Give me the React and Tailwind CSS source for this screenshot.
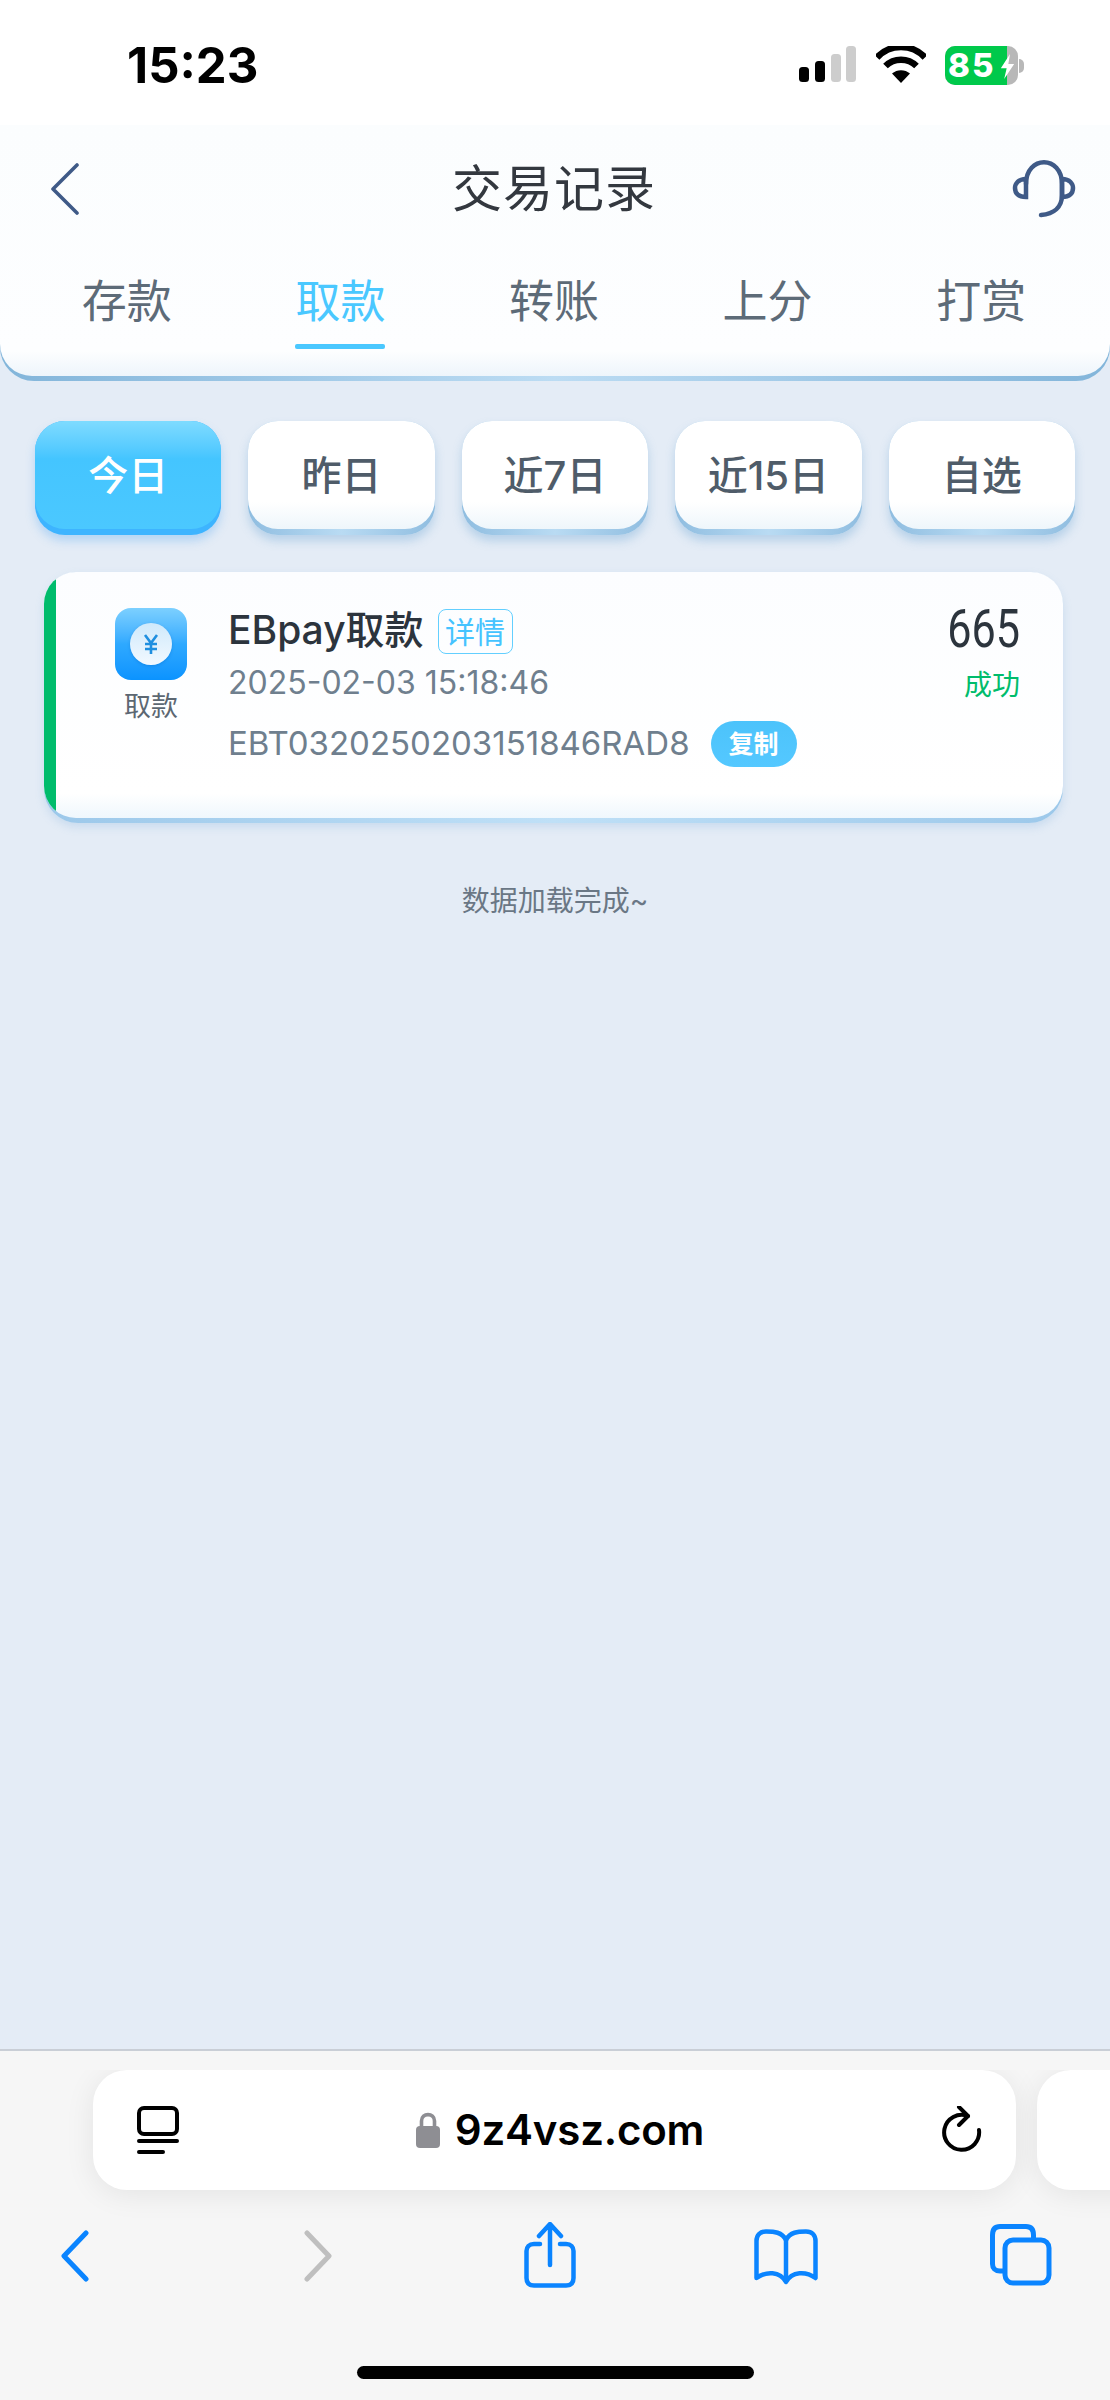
const CJK = "font-['Inter','Noto_Sans_CJK_SC',sans-serif]";

function Signal() {
  return (
    <svg width="58" height="36" viewBox="0 0 58 36" className="block">
      <rect x="0" y="21" width="10" height="15" rx="3.5" fill="#000" />
      <rect x="16" y="15" width="10" height="21" rx="3.5" fill="#000" />
      <rect x="32" y="8" width="10" height="28" rx="3.5" fill="#cdcdcd" />
      <rect x="47" y="0" width="10" height="36" rx="3.5" fill="#cdcdcd" />
    </svg>
  );
}

function Wifi() {
  return (
    <svg width="50" height="38" viewBox="0 0 50 38" className="block">
      <path d="M1 11.5 C14 -2.5 36 -2.5 49 11.5" fill="none" stroke="#000" strokeWidth="6.5" />
      <path d="M9.5 20 C18 11.5 32 11.5 40.5 20" fill="none" stroke="#000" strokeWidth="6.5" />
      <path d="M16 27.5 C21 23 29 23 34 27.5 L25 37 Z" fill="#000" />
    </svg>
  );
}

function Battery() {
  return (
    <div className="relative flex h-[39px] w-[81px] items-center">
      <div className="relative h-[39px] w-[73px] overflow-hidden rounded-[10px] bg-[#b8b8b8]">
        <div className="h-full w-[62px] bg-[#00c94b]" />
        <span className="absolute left-[3px] top-0 font-['Inter',sans-serif] text-[33px] font-extrabold leading-[39px] tracking-[2px] text-white">85</span>
        <svg width="15" height="27" viewBox="0 0 18 30" className="absolute left-[55px] top-[7px]">
          <path d="M12 0 L1 17 H8 L5 30 L17 12 H10 Z" fill="#fff" />
        </svg>
      </div>
      <div className="ml-[1px] h-[14px] w-[5px] rounded-r-full bg-[#b8b8b8]" />
    </div>
  );
}

function Headset() {
  return (
    <svg width="64" height="60" viewBox="0 0 64 60" fill="none" stroke="#3f5a87" strokeWidth="4.5" strokeLinecap="round" className="block">
      <path d="M14 25 C14 -4 50 -4 50 25 V36 C50 48 42 55 29 56" />
      <path d="M14 20 C6 20 3 25 3 29 C3 34 6 38 14 38 Z" />
      <path d="M50 20 C58 20 61 25 61 29 C61 34 58 38 50 38 Z" />
    </svg>
  );
}

function YenIcon() {
  return (
    <div className="flex h-[72px] w-[72px] items-center justify-center rounded-[16px] bg-gradient-to-b from-[#7cd0ff] via-[#2ea9ff] to-[#0a93ff]">
      <div className="flex h-[42px] w-[42px] items-center justify-center rounded-full bg-gradient-to-b from-[#cfe9fb] to-[#f2f9ff] shadow-[0_1px_3px_rgba(0,90,180,0.3)]">
        <svg width="16" height="20" viewBox="0 0 16 20" fill="none" stroke="#1f8fe0" strokeWidth="2.6" className="block">
          <path d="M2 1 L8 9 L14 1 M8 9 V20 M2 10 H14 M2 15 H14" />
        </svg>
      </div>
    </div>
  );
}

function Header() {
  const tabs = ["存款", "取款", "转账", "上分", "打赏"];
  return (
    <div className="rounded-b-[34px] bg-gradient-to-r from-[#82b5da] via-[#bcdcf3] to-[#82b5da] pb-[5px]">
      <div className="h-[251px] rounded-b-[32px] bg-gradient-to-b from-[#fbfdfe] via-[#fdfeff] via-90% to-[#eef5fb]">
        <div className="flex h-[125px] items-center justify-between pl-[50px] pr-[34px] pt-[2px]">
          <svg width="30" height="52" viewBox="0 0 30 52" fill="none" stroke="#3f5a87" strokeWidth="3.6" strokeLinecap="round" strokeLinejoin="round" className="block">
            <path d="M27 2 L3 26 L27 50" />
          </svg>
          <div className="ml-[16px] text-[50px] font-normal leading-none tracking-[1px] text-[#33383f]">交易记录</div>
          <Headset />
        </div>
        <div className="mt-[27px] grid grid-cols-5 pl-[20px] pr-[22px]">
          {tabs.map((t, i) => (
            <div key={t} className="flex flex-col items-center">
              <div className={`h-[50px] text-[45px] leading-[50px] ${i === 1 ? "text-[#4ac8ff]" : "text-[#5d6b78]"}`}>{t}</div>
              <div className={`mt-[17px] h-[5px] w-[90px] rounded-[2px] ${i === 1 ? "bg-[#4ac8ff]" : "bg-transparent"}`} />
            </div>
          ))}
        </div>
      </div>
    </div>
  );
}

function Filters() {
  const items = ["今日", "昨日", "近7日", "近15日", "自选"];
  return (
    <div className="mt-[40px] grid grid-cols-5 gap-[27px] px-[35px]">
      {items.map((t, i) => (
        <div
          key={t}
          className={`rounded-[30px] pb-[6px] ${i === 0 ? "bg-[#3db4ff] shadow-[0_6px_10px_rgba(90,170,240,0.35)]" : "bg-gradient-to-r from-[#8fbde0] via-[#b9dbf3] to-[#8fbde0] shadow-[0_6px_10px_rgba(100,160,210,0.35)]"}`}
        >
          <div
            className={`flex h-[108px] items-center justify-center rounded-[30px] pt-[2px] text-[40px] font-medium leading-none ${i === 0 ? "bg-gradient-to-b from-[#7edbff] via-[#44c5ff] via-35% to-[#4bc8ff] text-white" : "bg-gradient-to-b from-white via-white via-75% to-[#eef6fb] text-[#4f5c69]"}`}
          >
            {t}
          </div>
        </div>
      ))}
    </div>
  );
}

function Card() {
  return (
    <div className="ml-[44px] mr-[47px] mt-[37px] rounded-[34px] bg-gradient-to-r from-[#9cc8ea] via-[#bfe0f7] to-[#9cc8ea] pb-[5px] shadow-[0_4px_8px_rgba(120,170,220,0.25)]">
      <div className="flex h-[246px] overflow-hidden rounded-[32px] bg-gradient-to-b from-[#fcfdff] via-white via-90% to-[#eff7fd]">
        <div className="w-[12px] shrink-0 bg-[#00bc6c]" />
        <div className="flex w-[172px] shrink-0 flex-col items-center pl-[18px] pt-[36px]">
          <YenIcon />
          <div className="mt-[10px] text-[27px] leading-[34px] text-[#5c6772]">取款</div>
        </div>
        <div className="flex min-w-0 flex-1 flex-col pt-[36px]">
          <div className="flex h-[47px] items-center">
            <span className="-translate-y-[2px] text-[39px] font-medium leading-none text-[#2c343d]">EBpay取款</span>
            <span className="ml-[14px] flex h-[45px] w-[75px] items-center justify-center rounded-[8px] border border-[#63cfff] text-[30px] leading-none text-[#45c3ff]">详情</span>
          </div>
          <div className="mt-[6px] h-[44px] text-[32px] leading-[44px] text-[#6f7f8e]">2025-02-03 15:18:46</div>
          <div className="mt-[16px] flex h-[46px] items-center">
            <span className="-translate-y-[1px] text-[33px] leading-none text-[#6f7f8e]">EBT0320250203151846RAD8</span>
            <span className="ml-[21px] flex h-[46px] w-[86px] items-center justify-center rounded-full bg-gradient-to-b from-[#4cc3fb] to-[#54c8ff] text-[25px] font-bold leading-none text-white">复制</span>
          </div>
        </div>
        <div className="flex shrink-0 flex-col items-end pr-[43px] pt-[32px]">
          <div className="h-[50px] origin-right scale-x-[0.8] font-['Roboto',sans-serif] text-[54px] font-normal leading-[50px] text-[#2c343d]">665</div>
          <div className="mt-[14px] text-[28px] leading-[34px] text-[#00bc6c]">成功</div>
        </div>
      </div>
    </div>
  );
}

function BrowserBar() {
  return (
    <div className="mt-auto h-[351px] border-t-2 border-[#c9ced6] bg-[#f6f6f6] pt-[19px]">
      <div className="flex overflow-hidden pb-[32px] pl-[93px]">
        <div className="relative flex h-[120px] w-[923px] shrink-0 items-center justify-between rounded-[34px] bg-white pl-[44px] pr-[34px] shadow-[0_4px_30px_rgba(0,0,0,0.08)]">
          <svg width="42" height="48" viewBox="0 0 42 48" fill="none" stroke="#000" strokeWidth="4" strokeLinecap="round" className="block">
            <rect x="2" y="2" width="38" height="26" rx="5" />
            <path d="M2 35 H40 M2 46 H26" />
          </svg>
          <div className="-ml-[2px] flex items-center">
            <svg width="26" height="36" viewBox="0 0 26 36" className="block">
              <path d="M6.5 16 V9 C6.5 0.5 19.5 0.5 19.5 9 V16" fill="none" stroke="#8e8e93" strokeWidth="3.6" />
              <rect x="1" y="14" width="24" height="22" rx="4" fill="#8e8e93" />
            </svg>
            <span className="ml-[14px] font-['Inter',sans-serif] text-[42px] font-semibold leading-none tracking-[-0.2px] text-black">9z4vsz.com</span>
          </div>
          <svg width="40" height="48" viewBox="0 0 40 48" fill="none" stroke="#000" strokeWidth="4" strokeLinecap="round" strokeLinejoin="round" className="block">
            <path d="M26 10 A17.5 17.5 0 1 0 37 24" />
            <path d="M17 1 L26 10 L17 19" />
          </svg>
        </div>
        <div className="ml-[21px] h-[120px] w-[200px] shrink-0 rounded-[34px] bg-white shadow-[0_4px_30px_rgba(0,0,0,0.08)]" />
      </div>
      <div className="flex items-start pl-[60px]">
        <svg width="30" height="52" viewBox="0 0 30 52" fill="none" stroke="#0a84ff" strokeWidth="5" strokeLinecap="round" strokeLinejoin="round" className="mt-[8px] block">
          <path d="M26 3 L4 26 L26 49" />
        </svg>
        <svg width="30" height="52" viewBox="0 0 30 52" fill="none" stroke="#bfbfbf" strokeWidth="5" strokeLinecap="round" strokeLinejoin="round" className="ml-[213px] mt-[8px] block">
          <path d="M4 3 L26 26 L4 49" />
        </svg>
        <svg width="52" height="66" viewBox="0 0 52 66" fill="none" stroke="#0a84ff" strokeWidth="4.5" strokeLinecap="round" strokeLinejoin="round" className="ml-[191px] block">
          <path d="M16 22 H10 C5 22 2.5 25 2.5 29 V56 C2.5 61 5 63.5 10 63.5 H42 C47 63.5 49.5 61 49.5 56 V29 C49.5 25 47 22 42 22 H36" />
          <path d="M26 43 V3 M15 14 L26 2 L37 14" />
        </svg>
        <svg width="64" height="56" viewBox="0 0 64 56" fill="none" stroke="#0a84ff" strokeWidth="4.5" strokeLinejoin="round" className="ml-[178px] mt-[7px] block">
          <path d="M32 11 C28 3 20 2.5 12 2.5 C6 2.5 2.5 6 2.5 12 V49 C12 42 26 42 32 53 C38 42 52 42 61.5 49 V12 C61.5 6 58 2.5 52 2.5 C44 2.5 36 3 32 11 Z" />
          <path d="M32 11 V53" />
        </svg>
        <svg width="62" height="62" viewBox="0 0 62 62" fill="none" stroke="#0a84ff" strokeWidth="5" strokeLinejoin="round" className="ml-[172px] mt-[2px] block">
          <path d="M15 47 H10 C5 47 2.5 44 2.5 40 V11 C2.5 5 5 2.5 10 2.5 H36 C41 2.5 43.5 5 43.5 11 V16" />
          <rect x="15" y="16" width="44" height="43" rx="8" />
        </svg>
      </div>
      <div className="mx-auto mt-[78px] h-[13px] w-[397px] rounded-full bg-black" />
    </div>
  );
}

export default function App() {
  return (
    <div className={`flex h-[2400px] w-full flex-col overflow-hidden bg-[#e4ecf6] ${CJK}`}>
      <div className="flex h-[125px] items-start justify-between bg-white pl-[127px] pr-[84px]">
        <div className="mt-[43px] font-['Inter',sans-serif] text-[49px] font-bold leading-[46px] text-black">15:23</div>
        <div className="mt-[46px] flex items-start gap-[19px]">
          <Signal />
          <Wifi />
          <Battery />
        </div>
      </div>
      <Header />
      <Filters />
      <Card />
      <div className="mt-[60px] text-center text-[28px] leading-[36px] text-[#6a7785]">数据加载完成~</div>
      <BrowserBar />
    </div>
  );
}
